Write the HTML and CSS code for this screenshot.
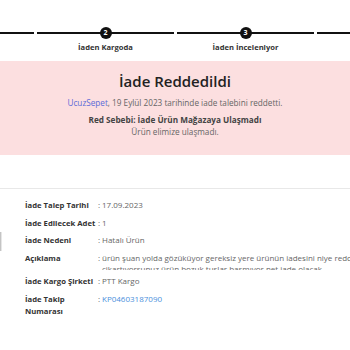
FILE: index.html
```html
<!DOCTYPE html>
<html lang="tr">
<head>
  <meta charset="UTF-8">
  <title>İade Detayı</title>
  <link rel="stylesheet" href="styles.css">
</head>
<body>

<div class="steps">
  <div class="step">
    <div class="step-line"><span class="step-dot">1</span></div>
    <div class="step-label">İade Talebi</div>
  </div>
  <div class="step">
    <div class="step-line"><span class="step-dot">2</span></div>
    <div class="step-label">İaden Kargoda</div>
  </div>
  <div class="step">
    <div class="step-line"><span class="step-dot">3</span></div>
    <div class="step-label">İaden İnceleniyor</div>
  </div>
  <div class="step">
    <div class="step-line"><span class="step-dot">4</span></div>
    <div class="step-label">Sonuç</div>
  </div>
</div>

<div class="result-box">
  <h2>İade Reddedildi</h2>
  <p class="result-info"><a href="#">UcuzSepet</a>, 19 Eylül 2023 tarihinde iade talebini reddetti.</p>
  <p class="reason-title">Red Sebebi: İade Ürün Mağazaya Ulaşmadı</p>
  <p class="reason-text">Ürün elimize ulaşmadı.</p>
</div>

<div class="details">
  <div class="product-edge"></div>
  <div class="detail-list">
    <div class="detail-row">
      <div class="detail-label">İade Talep Tarihi</div>
      <div class="detail-value"><span class="colon">:</span><span>17.09.2023</span></div>
    </div>
    <div class="detail-row">
      <div class="detail-label">İade Edilecek Adet</div>
      <div class="detail-value"><span class="colon">:</span><span>1</span></div>
    </div>
    <div class="detail-row">
      <div class="detail-label">İade Nedeni</div>
      <div class="detail-value"><span class="colon">:</span><span>Hatalı Ürün</span></div>
    </div>
    <div class="detail-row">
      <div class="detail-label">Açıklama</div>
      <div class="detail-value clipped"><span class="colon">:</span><span class="long-text">ürün şuan yolda gözüküyor gereksiz yere ürünün iadesini niye reddedip sorun cikartıyorsunuz ürün bozuk tuslar basmıyor net iade olacak</span></div>
    </div>
    <div class="detail-row">
      <div class="detail-label">İade Kargo Şirketi</div>
      <div class="detail-value"><span class="colon">:</span><span>PTT Kargo</span></div>
    </div>
    <div class="detail-row">
      <div class="detail-label">İade Takip Numarası</div>
      <div class="detail-value"><span class="colon">:</span><a href="#">KP04603187090</a></div>
    </div>
  </div>
</div>

</body>
</html>
```

FILE: styles.css
```css
body {
  margin: 0;
  font-family: 'Open Sans', sans-serif;
  background: #fff;
  color: #333;
  overflow: hidden;
  width: 350px;
  height: 350px;
}
a {
  text-decoration: none;
}

.steps {
  display: flex;
  gap: 3px;
  margin-left: -103px;
  padding-top: 27px;
}
.step {
  flex: 0 0 137px;
  display: flex;
  flex-direction: column;
  align-items: center;
}
.step-line {
  width: 100%;
  height: 12px;
  display: flex;
  justify-content: center;
  align-items: center;
  background: linear-gradient(#111, #111) center / 100% 2px no-repeat;
}
.step-dot {
  width: 12px;
  height: 12px;
  border-radius: 50%;
  background: #111;
  color: #fff;
  font-size: 7px;
  font-weight: 700;
  line-height: 12px;
  text-align: center;
}
.step-label {
  margin-top: 3px;
  font-size: 7.6px;
  font-weight: 700;
  color: #333;
  white-space: nowrap;
}

.result-box {
  margin-top: 9px;
  background: #fcdfe0;
  height: 94px;
  text-align: center;
  padding-top: 10px;
  box-sizing: border-box;
}
.result-box h2 {
  margin: 0;
  font-size: 15px;
  font-weight: 600;
  color: #222;
  line-height: 20px;
}
.result-info {
  margin: 6px 0 0;
  font-size: 8.2px;
  color: #666;
  line-height: 11px;
}
.result-info a {
  color: #5b6bd8;
}
.reason-title {
  margin: 6px 0 0;
  font-size: 8.2px;
  font-weight: 700;
  color: #444;
  line-height: 11px;
}
.reason-text {
  margin: 1px 0 0;
  font-size: 8.2px;
  color: #666;
  line-height: 11px;
}

.details {
  margin-top: 33px;
  border-top: 1px solid #e8e8e8;
  display: flex;
  padding-top: 10px;
}
.product-edge {
  flex: 0 0 1px;
  height: 19px;
  margin-top: 33px;
  background: #c4c4c4;
  border-right: 1px solid #e6e6e6;
}
.detail-list {
  margin-left: 23px;
  display: flex;
  flex-direction: column;
  gap: 5.5px;
}
.detail-row {
  display: flex;
  font-size: 8px;
  line-height: 12px;
}
.detail-label {
  flex: 0 0 73px;
  font-size: 7.7px;
  font-weight: 700;
  color: #333;
}
.detail-value {
  display: flex;
  color: #666;
}
.colon {
  flex: 0 0 4px;
}
.detail-value a {
  color: #4a8fdc;
}
.clipped {
  max-height: 18px;
  overflow: hidden;
}
.long-text {
  width: 318px;
  line-height: 11px;
}
```
